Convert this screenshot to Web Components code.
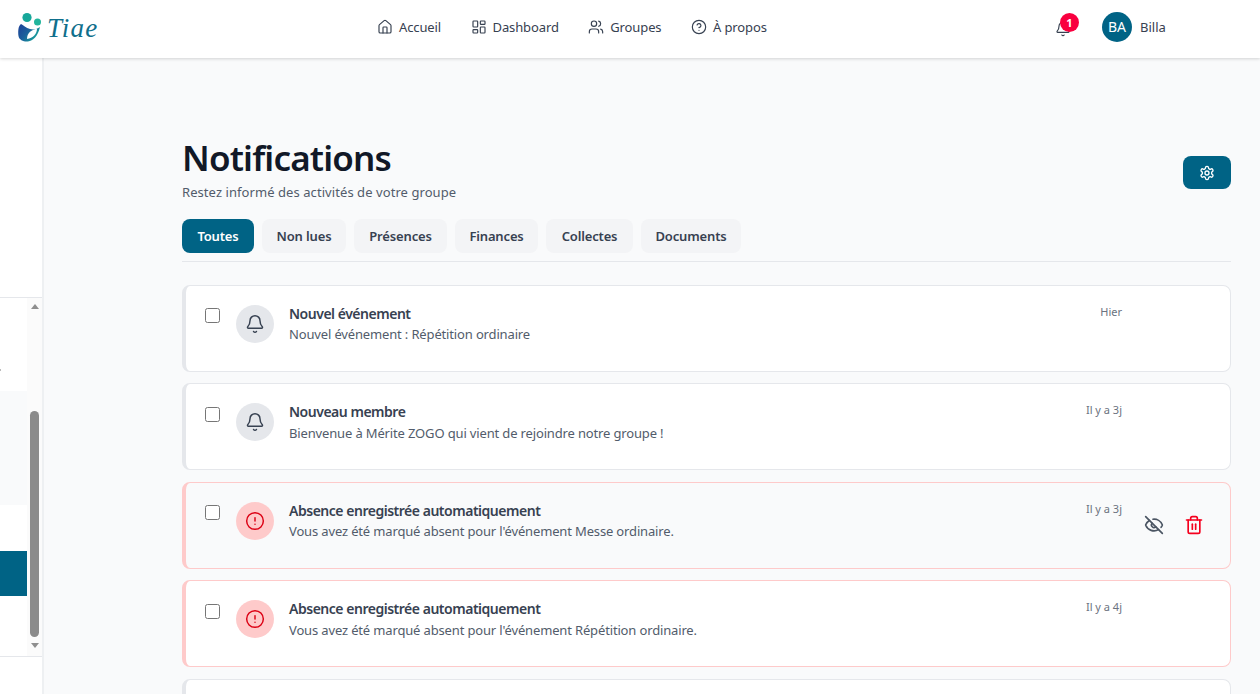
<!DOCTYPE html>
<html lang="fr">
<head>
<meta charset="utf-8">
<title>Notifications</title>
<style>
  html, body { margin: 0; height: 694px; overflow: hidden; background: #f9fafb; }
  body { font-family: "Noto Sans", "Liberation Sans", sans-serif; color: #374151; }
</style>
</head>
<body>
<app-shell>
  <app-header slot="header"></app-header>
  <app-sidebar slot="side"></app-sidebar>
  <page-head title="Notifications" sub="Restez informé des activités de votre groupe"></page-head>
  <filter-tabs></filter-tabs>
  <notif-card heading="Nouvel événement" text="Nouvel événement : Répétition ordinaire" time="Hier"></notif-card>
  <notif-card heading="Nouveau membre" text="Bienvenue à Mérite ZOGO qui vient de rejoindre notre groupe !" time="Il y a 3j"></notif-card>
  <notif-card kind="alert" actions heading="Absence enregistrée automatiquement" text="Vous avez été marqué absent pour l'événement Messe ordinaire." time="Il y a 3j"></notif-card>
  <notif-card kind="alert" heading="Absence enregistrée automatiquement" text="Vous avez été marqué absent pour l'événement Répétition ordinaire." time="Il y a 4j"></notif-card>
  <notif-card></notif-card>
</app-shell>

<script>
const ICONS = {
  home: '<path d="M15 21v-8a1 1 0 0 0-1-1h-4a1 1 0 0 0-1 1v8"/><path d="M3 10a2 2 0 0 1 .709-1.528l7-5.999a2 2 0 0 1 2.582 0l7 5.999A2 2 0 0 1 21 10v9a2 2 0 0 1-2 2H5a2 2 0 0 1-2-2z"/>',
  dashboard: '<rect x="3" y="3" width="7" height="9" rx="1"/><rect x="14" y="3" width="7" height="5" rx="1"/><rect x="14" y="12" width="7" height="9" rx="1"/><rect x="3" y="16" width="7" height="5" rx="1"/>',
  users: '<path d="M16 21v-2a4 4 0 0 0-4-4H6a4 4 0 0 0-4 4v2"/><circle cx="9" cy="7" r="4"/><path d="M22 21v-2a4 4 0 0 0-3-3.87"/><path d="M16 3.13a4 4 0 0 1 0 7.75"/>',
  help: '<circle cx="12" cy="12" r="10"/><path d="M9.09 9a3 3 0 0 1 5.83 1c0 2-3 3-3 3"/><path d="M12 17h.01"/>',
  bell: '<path d="M10.268 21a2 2 0 0 0 3.464 0"/><path d="M3.262 15.326A1 1 0 0 0 4 17h16a1 1 0 0 0 .74-1.673C19.41 13.956 18 12.499 18 8A6 6 0 0 0 6 8c0 4.499-1.411 5.956-2.738 7.326"/>',
  alert: '<circle cx="12" cy="12" r="10"/><line x1="12" y1="8" x2="12" y2="12"/><line x1="12" y1="16" x2="12.01" y2="16"/>',
  eyeoff: '<path d="M10.733 5.076a10.744 10.744 0 0 1 11.205 6.575 1 1 0 0 1 0 .696 10.747 10.747 0 0 1-1.444 2.49"/><path d="M14.084 14.158a3 3 0 0 1-4.242-4.242"/><path d="M17.479 17.499a10.75 10.75 0 0 1-15.417-5.151 1 1 0 0 1 0-.696 10.75 10.75 0 0 1 4.446-5.143"/><path d="m2 2 20 20"/>',
  trash: '<path d="M3 6h18"/><path d="M19 6v14c0 1-1 2-2 2H7c-1 0-2-1-2-2V6"/><path d="M8 6V4c0-1 1-2 2-2h4c1 0 2 1 2 2v2"/><line x1="10" y1="11" x2="10" y2="17"/><line x1="14" y1="11" x2="14" y2="17"/>',
  settings: '<path d="M12.22 2h-.44a2 2 0 0 0-2 2v.18a2 2 0 0 1-1 1.73l-.43.25a2 2 0 0 1-2 0l-.15-.08a2 2 0 0 0-2.73.73l-.22.38a2 2 0 0 0 .73 2.73l.15.1a2 2 0 0 1 1 1.72v.51a2 2 0 0 1-1 1.74l-.15.09a2 2 0 0 0-.73 2.73l.22.38a2 2 0 0 0 2.73.73l.15-.08a2 2 0 0 1 2 0l.43.25a2 2 0 0 1 1 1.73V20a2 2 0 0 0 2 2h.44a2 2 0 0 0 2-2v-.18a2 2 0 0 1 1-1.73l.43-.25a2 2 0 0 1 2 0l.15.08a2 2 0 0 0 2.73-.73l.22-.39a2 2 0 0 0-.73-2.73l-.15-.08a2 2 0 0 1-1-1.74v-.5a2 2 0 0 1 1-1.74l.15-.09a2 2 0 0 0 .73-2.73l-.22-.38a2 2 0 0 0-2.73-.73l-.15.08a2 2 0 0 1-2 0l-.43-.25a2 2 0 0 1-1-1.73V4a2 2 0 0 0-2-2z"/><circle cx="12" cy="12" r="3"/>'
};

function icon(name, size, width) {
  return `<svg width="${size}" height="${size}" viewBox="0 0 24 24" fill="none" stroke="currentColor" stroke-width="${width || 2}" stroke-linecap="round" stroke-linejoin="round" style="display:block;flex:none">${ICONS[name]}</svg>`;
}

class AppShell extends HTMLElement {
  constructor() {
    super();
    this.attachShadow({ mode: 'open' }).innerHTML = `
      <style>
        :host { display: grid; grid-template-columns: 44px 1fr; grid-template-rows: 58px 636px; width: 1260px; height: 694px; overflow: hidden; }
        .top { grid-column: 1 / 3; position: relative; z-index: 2; }
        main { padding: 80px 29px 0 138px; min-width: 0; overflow: hidden; display: flex; flex-direction: column; }
      </style>
      <div class="top"><slot name="header"></slot></div>
      <slot name="side"></slot>
      <main><slot></slot></main>
    `;
  }
}

class AppHeader extends HTMLElement {
  constructor() {
    super();
    const link = (name, label) => `<a>${icon(name, 16, 1.75)}<span>${label}</span></a>`;
    this.attachShadow({ mode: 'open' }).innerHTML = `
      <style>
        :host { display: flex; align-items: center; box-sizing: border-box; height: 58px; padding-bottom: 4px; background: #fff; box-shadow: 0 1px 3px rgba(0,0,0,.16); color: #374151; }
        .logo { display: flex; align-items: center; width: 377px; padding-left: 17px; box-sizing: border-box; flex: none; }
        .logo b { font: italic 400 27px "Liberation Serif", serif; color: #0f6f8c; letter-spacing: 1.2px; margin: 2px 0 0 0; }
        nav { display: flex; gap: 29.500px; width: 681px; flex: none; font-size: 13px; letter-spacing: -.12px; }
        a { display: flex; align-items: center; gap: 6px; }
        .bell { position: relative; width: 16px; height: 16px; margin: 3px 0 0 -3px; color: #374151; }
        .badge { position: absolute; left: 5px; top: -7.500px; width: 19px; height: 19px; border-radius: 50%; background: #f9003f; color: #fff; font: 700 11px/19px "Noto Sans", sans-serif; text-align: center; }
        .avatar { width: 30px; height: 30px; margin-left: 31px; border-radius: 50%; background: #006385; color: #fff; font-size: 14px; line-height: 30px; text-align: center; }
        .name { margin-left: 8px; font-size: 13px; }
      </style>
      <div class="logo">
        <svg width="30" height="30" viewBox="0 0 30 30" style="flex:none">
          <defs><linearGradient id="g" x1="0" y1="0" x2="1" y2="0.6"><stop offset="0" stop-color="#1d3f97"/><stop offset=".5" stop-color="#1b5f9c"/><stop offset="1" stop-color="#17a79a"/></linearGradient></defs>
          <circle cx="10" cy="5.500" r="4.600" fill="#17a79a"/>
          <circle cx="20.500" cy="10" r="3.500" fill="#22b59c"/>
          <path d="M4 12C1 14 1 20 1.500 24C2 28 7 30 11 29.500C16 29 21 24 23 15C20 17 17 18 13 17C9 16 6 13 4 12Z" fill="url(#g)"/>
          <path d="M10 27C10 21 14 18 20 16.500C20 22 16 26 10 27Z" fill="#fff"/>
        </svg>
        <b>Tiae</b>
      </div>
      <nav>${link('home', 'Accueil')}${link('dashboard', 'Dashboard')}${link('users', 'Groupes')}${link('help', 'À propos')}</nav>
      <div class="bell">${icon('bell', 16, 1.75)}<span class="badge">1</span></div>
      <div class="avatar">BA</div>
      <div class="name">Billa</div>
    `;
  }
}

class AppSidebar extends HTMLElement {
  constructor() {
    super();
    this.attachShadow({ mode: 'open' }).innerHTML = `
      <style>
        :host { display: flex; flex-direction: column; background: #fff; border-right: 2px solid #eef0f2; box-sizing: border-box; height: 636px; }
        .box { margin-top: 239px; height: 360px; box-sizing: border-box; display: grid; grid-template-columns: 27px 15px; border-top: 1px solid #e5e7eb; border-bottom: 1px solid #e5e7eb; }
        .list { display: flex; flex-direction: column; }
        .tick { margin-top: 71px; width: 1px; height: 2px; background: #bbb; }
        .soft { margin-top: 20px; height: 114px; background: #f9fafb; }
        .active { margin-top: 46px; height: 45px; background: #006385; }
        .bar { background: #fbfbfb; display: flex; flex-direction: column; align-items: center; }
        .up, .down { width: 0; height: 0; border-left: 4.500px solid transparent; border-right: 4.500px solid transparent; }
        .up { margin-top: 6px; border-bottom: 5px solid #8f8f8f; }
        .thumb { margin-top: 102px; width: 9px; height: 226px; border-radius: 5px; background: #8b8b8b; }
        .down { margin-top: 6px; border-top: 5px solid #8f8f8f; }
      </style>
      <div class="box">
        <div class="list"><div class="tick"></div><div class="soft"></div><div class="active"></div></div>
        <div class="bar"><div class="up"></div><div class="thumb"></div><div class="down"></div></div>
      </div>
    `;
  }
}

class PageHead extends HTMLElement {
  constructor() {
    super();
    this.attachShadow({ mode: 'open' }).innerHTML = `
      <style>
        :host { display: flex; justify-content: space-between; align-items: flex-start; height: 81px; flex: none; }
        h1 { margin: -1px 0 0; font-size: 35px; line-height: 42px; font-weight: 600; letter-spacing: -.82px; color: #111827; }
        p { margin: 4px 0 0; font-size: 13px; line-height: 18px; letter-spacing: .07px; color: #525c6b; }
        button { width: 48px; height: 33px; margin-top: 18px; padding: 0; border: 0; border-radius: 8px; background: #006385; color: #fff; display: grid; place-items: center; }
      </style>
      <div><h1>${this.getAttribute('title')}</h1><p>${this.getAttribute('sub')}</p></div>
      <button>${icon('settings', 16)}</button>
    `;
  }
}

class FilterTabs extends HTMLElement {
  constructor() {
    super();
    const tabs = [['Toutes', 72], ['Non lues', 84], ['Présences', 93], ['Finances', 83], ['Collectes', 87], ['Documents', 100]];
    this.attachShadow({ mode: 'open' }).innerHTML = `
      <style>
        :host { display: flex; gap: 8px; flex: none; padding-bottom: 8px; margin-bottom: 22.900px; border-bottom: 1px solid #e5e7eb; }
        span { height: 34px; border-radius: 8px; background: #f3f4f6; color: #374151; font-size: 13px; font-weight: 600; line-height: 34px; letter-spacing: -.15px; text-align: center; }
        .on { background: #006385; color: #fff; }
      </style>
      ${tabs.map(([t, w], i) => `<span class="${i ? '' : 'on'}" style="width:${w}px">${t}</span>`).join('')}
    `;
  }
}

class NotifCard extends HTMLElement {
  constructor() {
    super();
    const alert = this.getAttribute('kind') === 'alert';
    const actions = this.hasAttribute('actions');
    this.attachShadow({ mode: 'open' }).innerHTML = `
      <style>
        :host { display: flex; flex: none; box-sizing: border-box; height: 86.800px; margin-bottom: 11.700px; padding: 16px 28px 0 19px; border: 1px solid #e5e7eb; border-left-width: 4px; border-radius: 8px; background: #fff; }
        :host([kind="alert"]) { border-color: #fecaca; }
        :host([actions]) { background: #f9fafb; }
        .check { width: 13px; height: 13px; margin: 6.600px 0 0; border: 1px solid #767676; border-radius: 2.500px; background: #fff; flex: none; }
        .dot { width: 38px; height: 38px; margin: 3px 0 0 16px; border-radius: 50%; background: #e5e7eb; color: #374151; display: grid; place-items: center; flex: none; }
        :host([kind="alert"]) .dot { background: #fecaca; color: #dc0014; }
        .body { margin-left: 15px; flex: 1; min-width: 0; }
        h3 { margin: 2px 0 0; font-size: 14px; line-height: 20px; font-weight: 600; letter-spacing: -.48px; color: #374151; }
        p { margin: .3px 0 0; font-size: 13px; line-height: 20px; letter-spacing: -.15px; color: #525c6b; }
        time { margin-top: 1px; font-size: 11px; line-height: 18px; color: #6b7280; white-space: nowrap; }
        .acts { display: flex; align-items: center; gap: 20px; width: 80px; height: 52px; box-sizing: border-box; padding-left: 22px; flex: none; }
        .eye { color: #4b5563; }
        .bin { color: #f5001e; }
      </style>
      ${this.hasAttribute('heading') ? `
      <div class="check"></div>
      <div class="dot">${icon(alert ? 'alert' : 'bell', 20, 1.75)}</div>
      <div class="body"><h3>${this.getAttribute('heading')}</h3><p>${this.getAttribute('text')}</p></div>
      <time>${this.getAttribute('time')}</time>
      <div class="acts">${actions ? `<span class="eye">${icon('eyeoff', 20)}</span><span class="bin">${icon('trash', 20)}</span>` : ''}</div>
      ` : ''}
    `;
  }
}

customElements.define('app-shell', AppShell);
customElements.define('app-header', AppHeader);
customElements.define('app-sidebar', AppSidebar);
customElements.define('page-head', PageHead);
customElements.define('filter-tabs', FilterTabs);
customElements.define('notif-card', NotifCard);
</script>
</body>
</html>
